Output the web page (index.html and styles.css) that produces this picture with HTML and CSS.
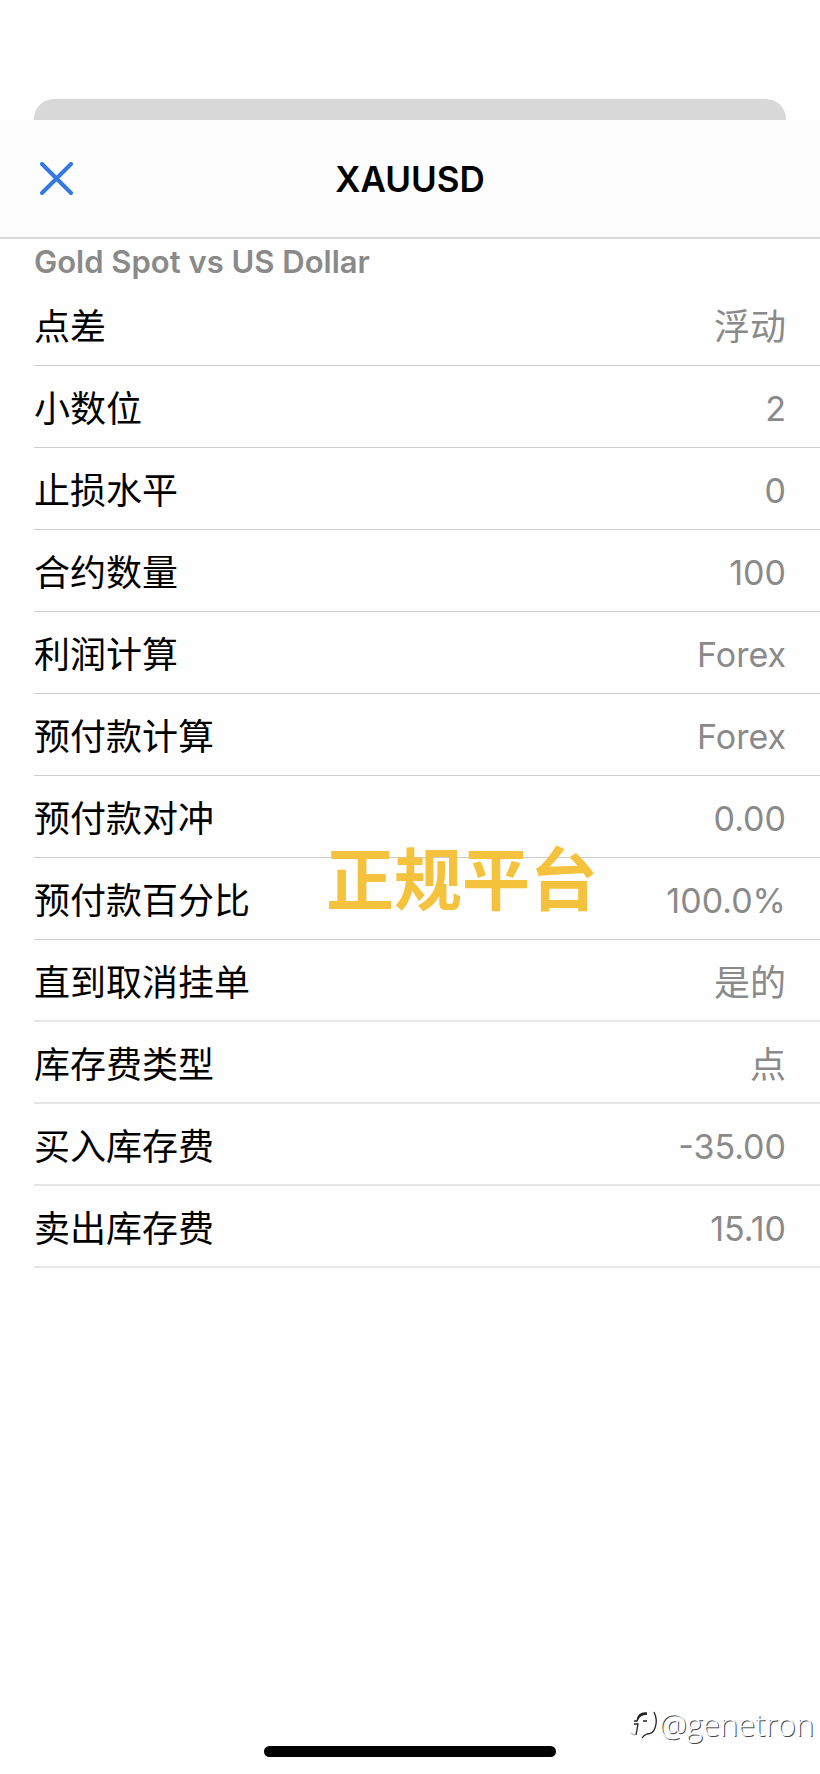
FILE: index.html
```
<!DOCTYPE html>
<html lang="zh-CN">
<head>
    <meta charset="UTF-8">
    <meta name="viewport" content="width=device-width, initial-scale=1.0">
    <title>XAUUSD</title>
    <link rel="stylesheet" href="styles.css">
</head>
<body>
    <div class="screen">
        <div class="back-card"></div>
        <header class="sheet-header">
            <button class="close-button" type="button" aria-label="关闭">
                <svg width="34" height="34" viewBox="0 0 34 34" fill="none" stroke="#3478e5" stroke-width="4" stroke-linecap="round">
                    <path d="M2 2L31 31M31 2L2 31"/>
                </svg>
            </button>
            <h1>XAUUSD</h1>
        </header>

        <main class="details">
            <h2>Gold Spot vs US Dollar</h2>
            <table class="specs">
                <tbody>
                    <tr><th scope="row">点差</th><td>浮动</td></tr>
                    <tr><th scope="row">小数位</th><td class="latin">2</td></tr>
                    <tr><th scope="row">止损水平</th><td class="latin">0</td></tr>
                    <tr><th scope="row">合约数量</th><td class="latin">100</td></tr>
                    <tr><th scope="row">利润计算</th><td class="latin">Forex</td></tr>
                    <tr><th scope="row">预付款计算</th><td class="latin">Forex</td></tr>
                    <tr><th scope="row">预付款对冲</th><td class="latin">0.00</td></tr>
                    <tr><th scope="row">预付款百分比</th><td class="latin">100.0%</td></tr>
                    <tr><th scope="row">直到取消挂单</th><td>是的</td></tr>
                    <tr><th scope="row">库存费类型</th><td>点</td></tr>
                    <tr><th scope="row">买入库存费</th><td class="latin">-35.00</td></tr>
                    <tr><th scope="row">卖出库存费</th><td class="latin">15.10</td></tr>
                </tbody>
            </table>
            <div class="stamp">正规平台</div>
        </main>

        <div class="watermark">
            <svg width="30" height="34" viewBox="0 0 30 34" fill="none" stroke="#222" stroke-width="1.300">
                <path d="M5 14H8Q9 5 18 6M8 14Q10 7 18 7M5 17H9Q8 23 7 28M14 14H18"/>
                <path d="M25 5Q29 13 26 21Q24 27 18 27Q15 28 13 31"/>
                <path d="M2 26Q4 28 6 28" stroke="#bbb"/>
            </svg>
            <span>@genetron</span>
        </div>
        <div class="home-bar"></div>
    </div>
</body>
</html>
```
FILE: styles.css
```
* {
    margin: 0;
    padding: 0;
    box-sizing: border-box;
}

body {
    font-family: Inter, "Noto Sans CJK SC", sans-serif;
    background: #fefefe;
    color: #000;
}

.screen {
    position: relative;
    display: flex;
    flex-direction: column;
    min-height: 100vh;
    padding-top: 99px;
}

.back-card {
    height: 21px;
    margin: 0 34px;
    background: #d8d8d8;
    border-radius: 20px 20px 0 0;
}

.sheet-header {
    display: grid;
    grid-template-columns: 1fr auto 1fr;
    align-items: center;
    height: 119px;
    padding: 0 40px;
    background: #fdfdfd;
    border-bottom: 2px solid #dadada;
}

.close-button {
    justify-self: start;
    display: flex;
    border: none;
    background: none;
    cursor: pointer;
}

h1 {
    font-size: 35px;
    font-weight: 600;
    line-height: 40px;
}

.details {
    position: relative;
    padding-left: 34px;
}

h2 {
    font-size: 31px;
    font-weight: 600;
    line-height: 45px;
    color: #8a8a8a;
}

.specs {
    width: 100%;
    border-collapse: separate;
    border-spacing: 0;
    font-size: 36px;
    line-height: 40px;
}

.specs th,
.specs td {
    height: 82px;
    padding-top: 4px;
    border-bottom: 1px solid #cdcdcd;
    font-weight: 400;
    vertical-align: middle;
}

.specs tr:nth-child(n+9) th,
.specs tr:nth-child(n+9) td {
    padding-top: 6px;
    border-bottom: 2px solid #e6e6e6;
}

.specs th {
    text-align: left;
}

.specs td {
    padding-right: 34px;
    text-align: right;
    color: #8a8a8a;
}

.specs .latin {
    font-size: 34px;
}

.stamp {
    position: absolute;
    top: 601px;
    left: 326px;
    font-size: 68px;
    font-weight: 700;
    line-height: 80px;
    color: #f5c23e;
    pointer-events: none;
}

.watermark {
    position: absolute;
    right: 6px;
    bottom: 30px;
    display: flex;
    align-items: center;
    font-family: "Open Sans", sans-serif;
    font-size: 31px;
    font-weight: 300;
    line-height: 40px;
    color: #fff;
    text-shadow: 1px 1px 0 #444;
}

.home-bar {
    width: 292px;
    height: 11px;
    margin: auto auto 17px;
    background: #000;
    border-radius: 6px;
}
```
